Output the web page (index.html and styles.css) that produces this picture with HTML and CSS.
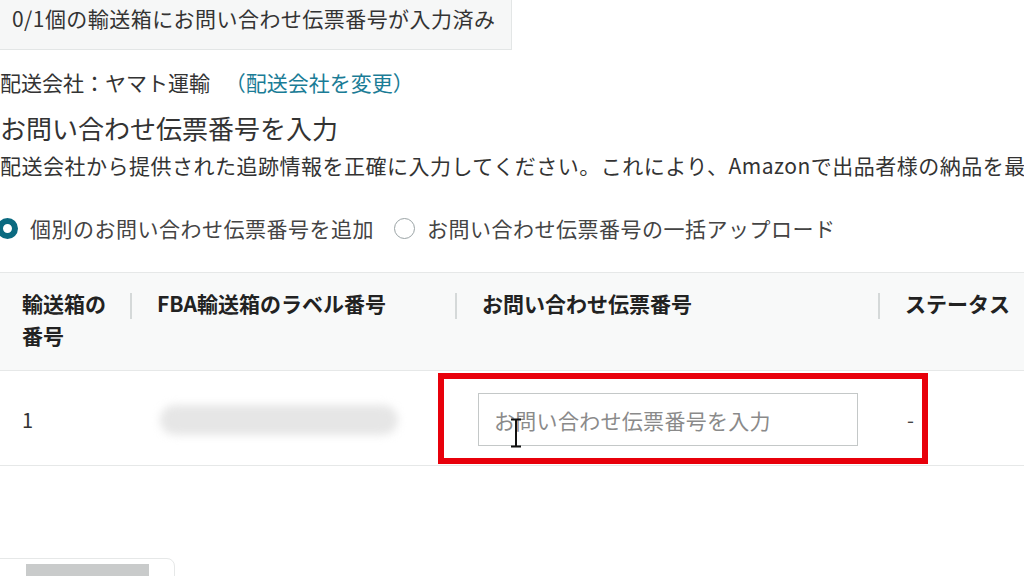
FILE: index.html
```html
<!DOCTYPE html>
<html lang="ja">
<head>
    <meta charset="UTF-8">
    <meta name="viewport" content="width=device-width, initial-scale=1.0">
    <title>お問い合わせ伝票番号</title>
    <link rel="stylesheet" href="styles.css">
</head>
<body>
    <div class="page">
        <div class="summary">0/1個の輸送箱にお問い合わせ伝票番号が入力済み</div>

        <p class="carrier">配送会社：ヤマト運輸 <a class="link" href="#">（配送会社を変更）</a></p>

        <h2 class="title">お問い合わせ伝票番号を入力</h2>
        <p class="desc">配送会社から提供された追跡情報を正確に入力してください。これにより、Amazonで出品者様の納品を最速で受領できます。</p>

        <div class="radios">
            <label class="radio-option">
                <span class="radio checked"></span>
                個別のお問い合わせ伝票番号を追加
            </label>
            <label class="radio-option">
                <span class="radio"></span>
                お問い合わせ伝票番号の一括アップロード
            </label>
        </div>

        <div class="table">
            <div class="table-head">
                <div class="th first">輸送箱の<br>番号</div>
                <div class="th">FBA輸送箱のラベル番号</div>
                <div class="th">お問い合わせ伝票番号</div>
                <div class="th">ステータス</div>
            </div>
            <div class="table-row">
                <div class="td first">1</div>
                <div class="td"><span class="blurred"></span></div>
                <div class="td">
                    <div class="field">お問い合わせ伝票番号を入力</div>
                </div>
                <div class="td status">-</div>

                <!-- annotation + mouse cursor over the input -->
                <div class="highlight"></div>
                <svg class="cursor" width="14" height="30" viewBox="0 0 14 30">
                    <path d="M2 1.5h10M7 1.5v27M2 28.5h10" stroke="#111" stroke-width="2" fill="none"/>
                </svg>
            </div>
        </div>

        <div class="footer">
            <div class="footer-btn"></div>
        </div>
    </div>
</body>
</html>
```

FILE: styles.css
```css
body {
    margin: 0;
    width: 1024px;
    height: 576px;
    overflow: hidden;
    background-color: #fff;
    font-family: "Noto Sans CJK JP", "Noto Sans", sans-serif;
    color: #333;
}

.page {
    font-size: 21px;
}

p, h2 {
    margin: 0;
}

.summary {
    width: 532px;
    box-sizing: border-box;
    margin-left: -20px;
    padding: 4px 0 17px 32px;
    line-height: 28px;
    font-size: 21px;
    letter-spacing: 0.45px;
    background-color: #f6f7f7;
    border-right: 1px solid #e3e6e6;
    border-bottom: 1px solid #e3e6e6;
    white-space: nowrap;
}

.carrier {
    margin-top: 18px;
    line-height: 28px;
    font-size: 21px;
    word-spacing: 10px;
}

.link {
    color: #1a7c96;
    text-decoration: none;
}

.title {
    margin-top: 15px;
    font-size: 26px;
    font-weight: 400;
    line-height: 34px;
    color: #333;
}

.desc {
    margin-top: 6px;
    line-height: 28px;
    font-size: 21px;
    letter-spacing: 0.5px;
    white-space: nowrap;
}

.radios {
    margin-top: 35px;
    display: flex;
    gap: 20px;
    line-height: 28px;
    font-size: 21px;
    letter-spacing: 0.5px;
    color: #444;
}

.radio-option {
    display: flex;
    align-items: center;
    gap: 12px;
}

.radio {
    width: 21px;
    height: 21px;
    box-sizing: border-box;
    border-radius: 50%;
    border: 1.5px solid #9aa3a5;
    background: #fff;
}

.radio.checked {
    margin-left: -3px;
    border: 6px solid #0b6a80;
}

.table {
    margin-top: 30px;
}

.table-head,
.table-row {
    display: grid;
    grid-template-columns: 130px 325px 423px 1fr;
}

.table-head {
    background-color: #f8f9f9;
    border-top: 1px solid #e6e8e8;
    border-bottom: 1px solid #e6e8e8;
    padding: 14px 0 19px;
}

.th {
    position: relative;
    padding-left: 27px;
    font-weight: 700;
    font-size: 21px;
    line-height: 32px;
    color: #222;
    white-space: nowrap;
}

.th::before {
    content: "";
    position: absolute;
    left: 0;
    top: 6px;
    height: 26px;
    border-left: 2px solid #d5d9d9;
}

.th.first::before {
    display: none;
}

.first {
    padding-left: 22px;
}

.table-row {
    position: relative;
    border-bottom: 1px solid #e6e8e8;
    padding: 22px 0 19px;
    align-items: center;
}

.td {
    padding-left: 27px;
    line-height: 28px;
    font-size: 20px;
}

.td.first {
    padding-left: 22px;
}

.blurred {
    display: block;
    margin-left: 3px;
    width: 238px;
    height: 30px;
    border-radius: 15px;
    background-color: #e6e6e6;
    filter: blur(4px);
}

.field {
    margin-left: -4px;
    width: 380px;
    height: 53px;
    box-sizing: border-box;
    border: 1px solid #c4c8c8;
    padding: 0 15px;
    display: flex;
    align-items: center;
    color: #8a8a8a;
    font-size: 21px;
    letter-spacing: 0.3px;
}

.status {
    padding-left: 29px;
    color: #444;
}

.highlight {
    position: absolute;
    left: 438px;
    top: 2px;
    width: 490px;
    height: 91px;
    box-sizing: border-box;
    border: 6px solid #e8000b;
}

.cursor {
    position: absolute;
    left: 509px;
    top: 47px;
}

.footer {
    margin-top: 92px;
    margin-left: -10px;
    width: 185px;
    height: 40px;
    border: 1px solid #e6e8e8;
    border-radius: 0 8px 0 0;
    padding: 5px 0 0 35px;
    box-sizing: border-box;
}

.footer-btn {
    width: 123px;
    height: 40px;
    background-color: #c9cbcb;
}
```
